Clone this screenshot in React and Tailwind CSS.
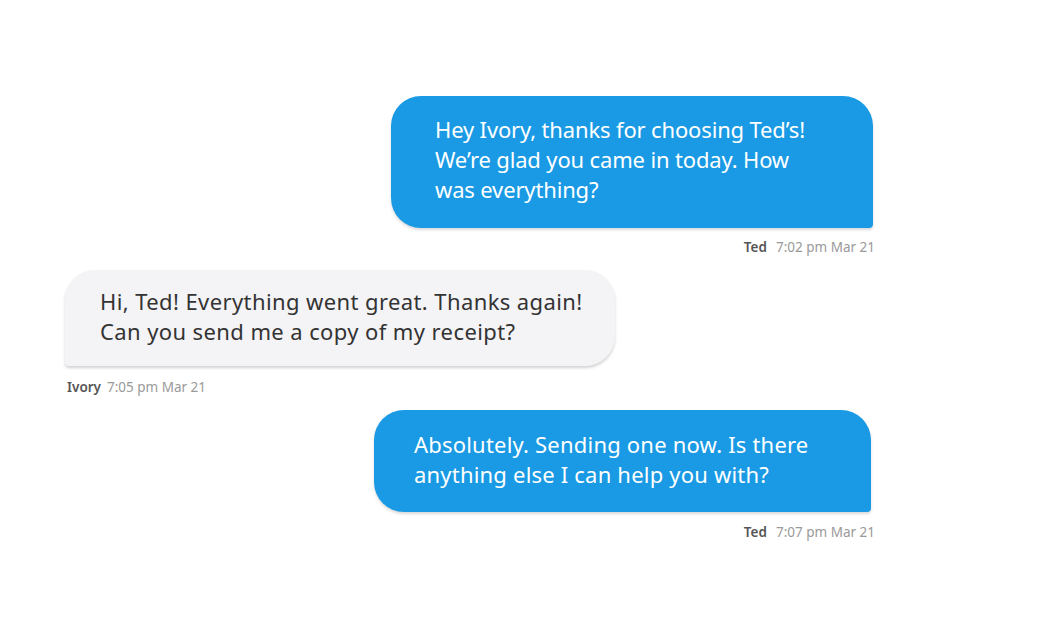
export default function App() {
  const font = { fontFamily: '"Noto Sans", "Open Sans", sans-serif' };
  return (
    <div className="w-[1050px] h-[618px] bg-white relative overflow-hidden" style={font}>
      <div className="flex flex-col pt-[96px]">
        <div className="flex flex-col items-end pr-[177px]">
          <div className="w-[482px] h-[132px] bg-[#1a9ae4] text-white rounded-[30px] rounded-br-[4px] pl-[44px] pt-[18px] text-[22px] leading-[30px] tracking-[-0.15px] shadow-[0_2px_3px_rgba(0,0,0,0.15)]">
            <div>Hey Ivory, thanks for choosing Ted’s!</div>
            <div>We’re glad you came in today. How</div>
            <div>was everything?</div>
          </div>
          <div className="mt-[11px] mr-[-2px] text-[13.5px] leading-[16px]">
            <span className="font-semibold text-[#555]">Ted</span>
            <span className="ml-[9px] text-[#9a9a9a]">7:02 pm Mar 21</span>
          </div>
        </div>
        <div className="flex flex-col items-start pl-[65px] mt-[15px]">
          <div className="w-[550px] h-[96px] bg-[#f4f4f6] text-[#333] rounded-[30px] rounded-bl-[4px] pl-[35px] pt-[16px] text-[22px] leading-[30px] tracking-[0.4px] shadow-[0_2px_3px_rgba(0,0,0,0.18)]">
            <div>Hi, Ted! Everything went great. Thanks again!</div>
            <div>Can you send me a copy of my receipt?</div>
          </div>
          <div className="mt-[13px] ml-[2px] text-[13.5px] leading-[16px]">
            <span className="font-semibold text-[#555]">Ivory</span>
            <span className="ml-[6px] text-[#9a9a9a]">7:05 pm Mar 21</span>
          </div>
        </div>
        <div className="flex flex-col items-end pr-[179px] mt-[15px]">
          <div className="w-[497px] h-[102px] bg-[#1a9ae4] text-white rounded-[30px] rounded-br-[4px] pl-[40px] pt-[19px] text-[22px] leading-[30px] tracking-[0.2px] shadow-[0_2px_3px_rgba(0,0,0,0.15)]">
            <div>Absolutely. Sending one now. Is there</div>
            <div>anything else I can help you with?</div>
          </div>
          <div className="mt-[12px] mr-[-4px] text-[13.5px] leading-[16px]">
            <span className="font-semibold text-[#555]">Ted</span>
            <span className="ml-[9px] text-[#9a9a9a]">7:07 pm Mar 21</span>
          </div>
        </div>
      </div>
    </div>
  );
}
